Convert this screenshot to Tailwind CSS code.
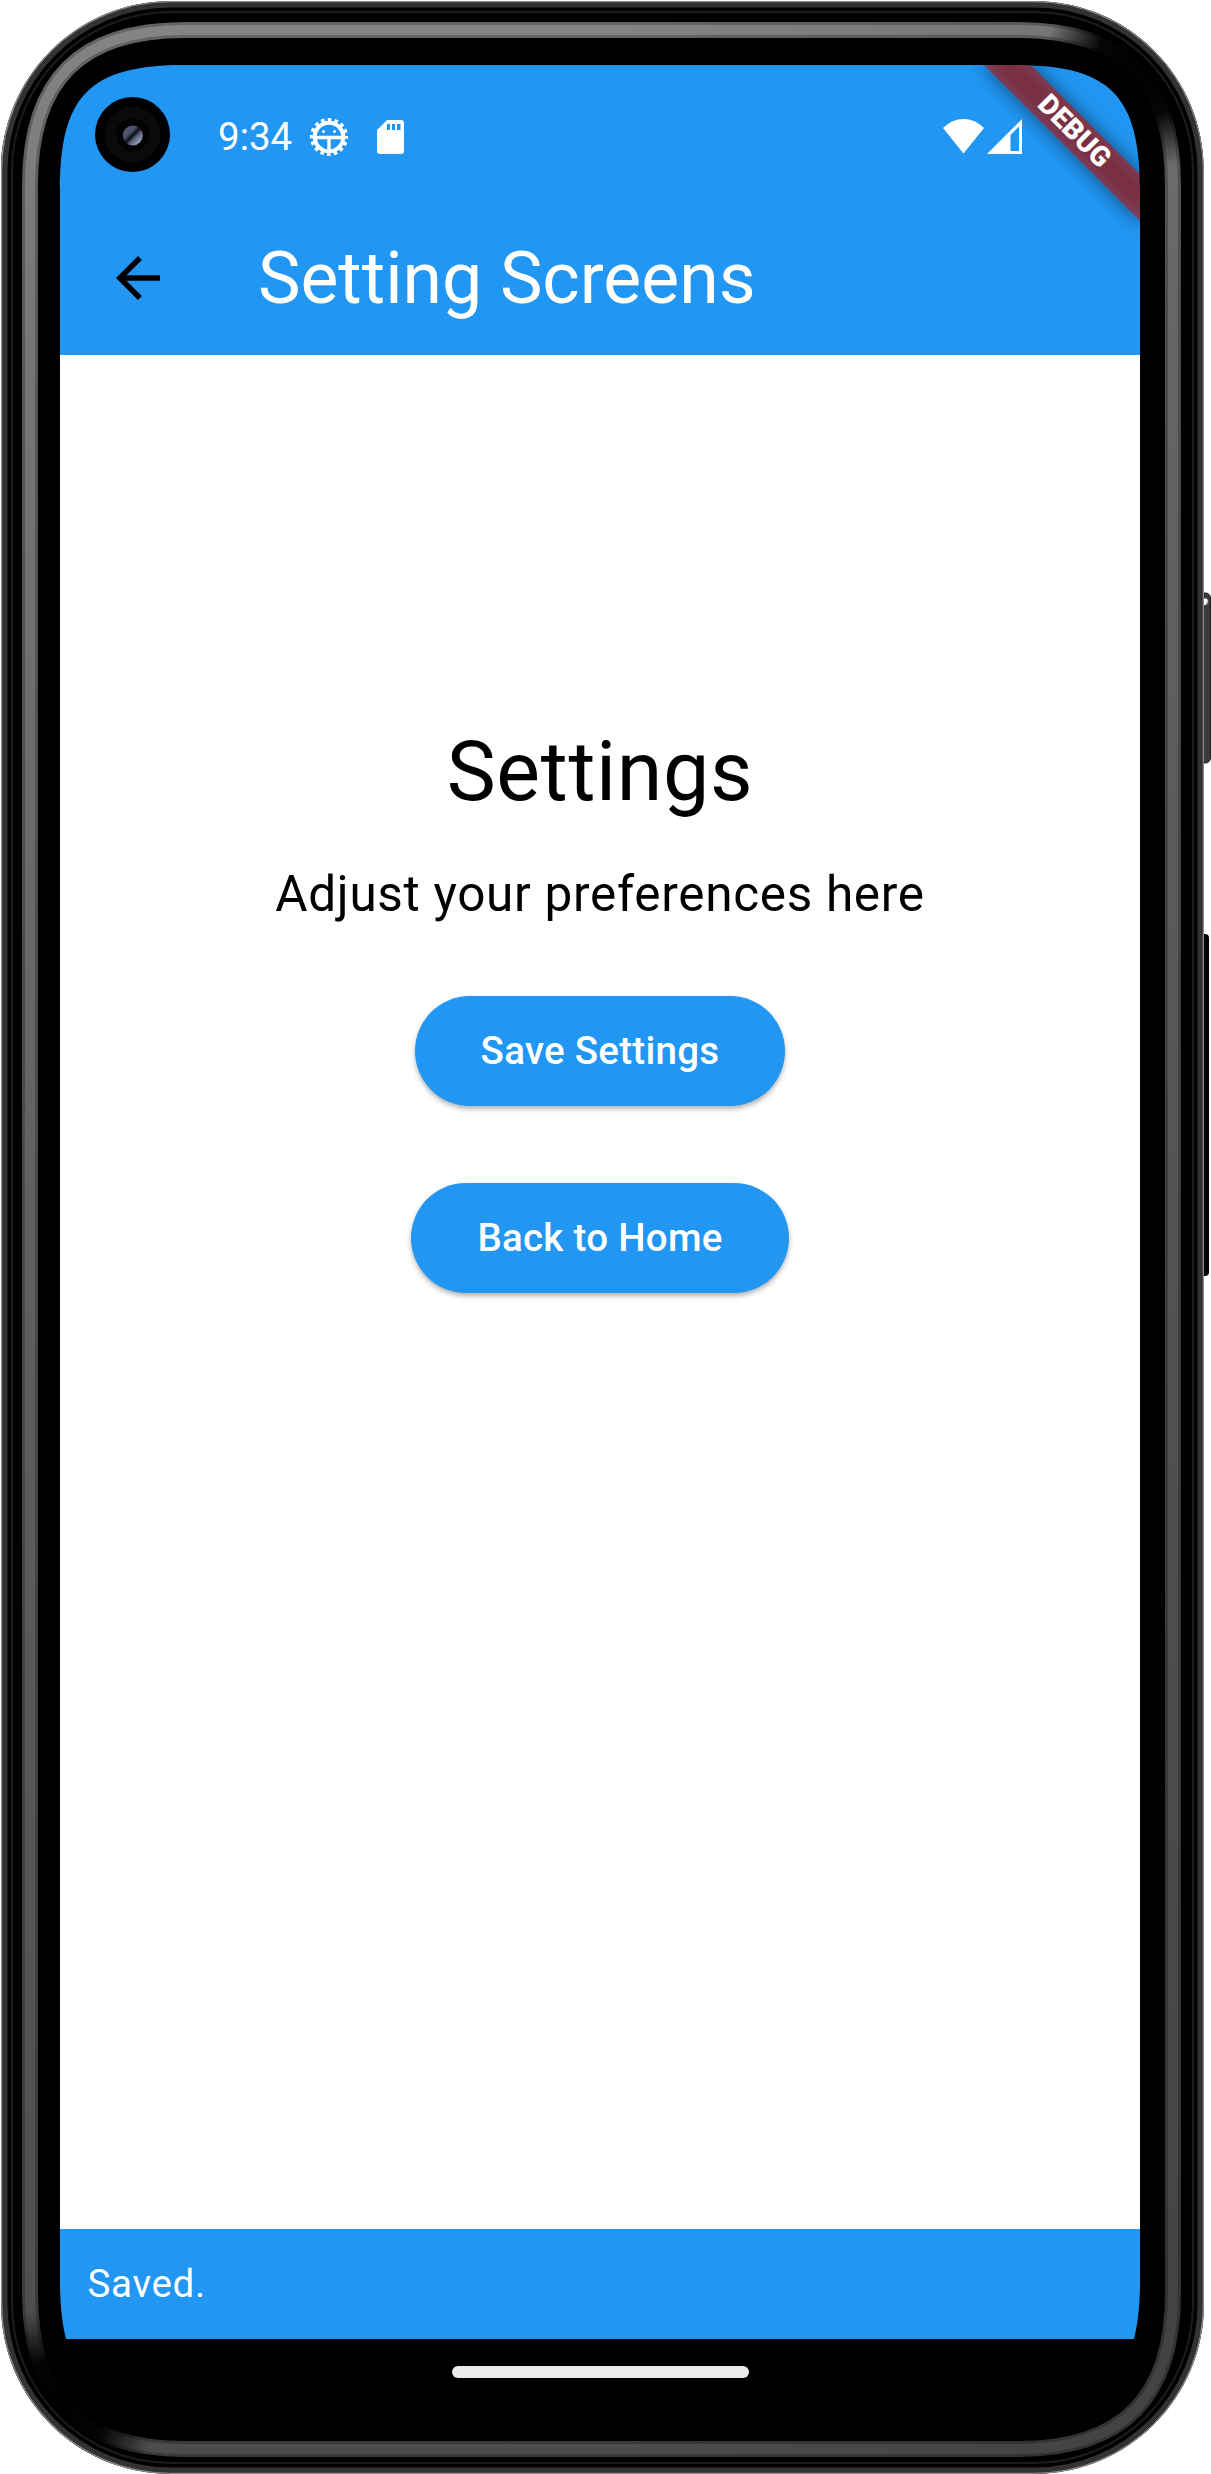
<!DOCTYPE html>
<html lang="en">
<head>
<meta charset="utf-8">
<title>Setting Screens</title>
<script src="https://cdn.jsdelivr.net/npm/@tailwindcss/browser@4"></script>
</head>
<body class="bg-white font-['Roboto',sans-serif]">
<div class="relative w-[1211px] h-[2474px] overflow-hidden pt-[65px] pl-[60px]">
  <main class="relative w-[1080px] h-[2340px] overflow-hidden bg-white flex flex-col">
    <header class="h-[290px] bg-[#2196f3] text-white flex flex-col shrink-0">
      <div class="h-[136px] flex items-center pl-[158px] pr-[118px] pt-[7px]">
        <span class="text-[38.5px] leading-none pt-[2px]">9:34</span>
        <svg class="ml-[17px] w-[40px] h-[40px]" viewBox="0 0 40 40" fill="none" stroke="#fff">
          <circle cx="20" cy="20" r="14.300" stroke-width="4"/>
          <circle cx="20" cy="20" r="17.300" stroke-width="3.600" stroke-dasharray="3.500 3.294" stroke-dashoffset="1.750"/>
          <path d="M6 20.500H34M20 21V34" stroke-width="3.400"/>
          <circle cx="14.500" cy="14.500" r="1.500" fill="#fff" stroke="none"/>
          <circle cx="25.500" cy="14.500" r="1.500" fill="#fff" stroke="none"/>
        </svg>
        <svg class="ml-[28px] w-[27px] h-[34px]" viewBox="0 0 27 34"><path fill="#fff" fill-rule="evenodd" d="M10 0H24Q27 0 27 3V31Q27 34 24 34H3Q0 34 0 31V10ZM10 4V10H13V4ZM15 4V10H18V4ZM20 4V10H23.500V4Z"/></svg>
        <svg class="ml-auto w-[41px] h-[35px]" viewBox="0 0 41 35"><path fill="#fff" d="M0 9Q9 0 20.500 0T41 9L20.500 34.500Z"/></svg>
        <svg class="ml-[3px] w-[35px] h-[35px]" viewBox="0 0 35 35"><path fill="#fff" fill-rule="evenodd" d="M35 0V35H0ZM32 7.500L23.500 16V32H32Z"/></svg>
      </div>
      <div class="h-[154px] flex items-center pl-[44.5px]">
        <svg class="w-[66px] h-[66px]" viewBox="0 0 24 24"><path d="M20 11H7.830l5.590-5.590L12 4l-8 8 8 8 1.410-1.410L7.830 13H20v-2z"/></svg>
        <h1 class="ml-[87.5px] pt-[2px] text-[71.5px] leading-none">Setting Screens</h1>
      </div>
    </header>
    <section class="grow flex flex-col items-center pt-[358px]">
      <h2 class="text-[82.5px] leading-[118px] tracking-[0.6875px]">Settings</h2>
      <p class="mt-[28px] text-[49.5px] leading-[71px] tracking-[0.6875px]">Adjust your preferences here</p>
      <button class="mt-[66px] h-[110px] px-[66px] rounded-full bg-[#2196f3] text-white text-[38.5px] font-medium tracking-[0.275px] shadow-[0_3px_5px_rgba(0,0,0,0.3)]">Save Settings</button>
      <button class="mt-[77px] h-[110px] px-[66px] rounded-full bg-[#2196f3] text-white text-[38.5px] font-medium tracking-[0.275px] shadow-[0_3px_5px_rgba(0,0,0,0.3)]">Back to Home</button>
    </section>
    <div class="h-[110px] shrink-0 bg-[#2196f3] text-white flex items-center pl-[27.5px] text-[38.5px] tracking-[0.6875px]">Saved.</div>
    <nav class="h-[66px] shrink-0 bg-black flex justify-center pt-[27px]"><div class="w-[297px] h-[12px] rounded-full bg-[#ebebeb]"></div></nav>
    <div class="absolute left-[903.9px] top-[49.6px] w-[220px] h-[33px] rotate-45">
      <div class="absolute inset-0 bg-black/50 blur-[10px]"></div>
      <div class="relative w-full h-full bg-[#b71c1c]/63 text-white text-[28px] font-black flex items-center justify-center leading-none pb-[1px]">DEBUG</div>
    </div>
  </main>

  <!-- Device frame over the screen -->
  <svg class="absolute inset-0 w-[1211px] h-[2474px] pointer-events-none" viewBox="0 0 1211 2474" fill="none">
    <defs>
      <linearGradient id="ring" x1="0" y1="0" x2="0" y2="2474" gradientUnits="userSpaceOnUse">
        <stop offset="0" stop-color="#858585"/><stop offset=".12" stop-color="#777"/><stop offset=".5" stop-color="#606060"/><stop offset="1" stop-color="#4c4c4c"/>
      </linearGradient>
      <linearGradient id="side" x1="0" y1="0" x2="1211" y2="0" gradientUnits="userSpaceOnUse">
        <stop offset=".5" stop-color="#000" stop-opacity="0"/><stop offset="1" stop-color="#000" stop-opacity=".15"/>
      </linearGradient>
      <radialGradient id="dark"><stop offset="0" stop-color="#000"/><stop offset=".5" stop-color="#000" stop-opacity=".95"/><stop offset="1" stop-color="#000" stop-opacity="0"/></radialGradient>
      <linearGradient id="lens" x1="0" y1="0" x2="1" y2="1"><stop offset="0" stop-color="#59617c"/><stop offset=".36" stop-color="#4a5068"/><stop offset=".5" stop-color="#0c0e16"/><stop offset=".62" stop-color="#59617c"/><stop offset="1" stop-color="#bcc9ea"/></linearGradient>
      <clipPath id="body"><path clip-rule="evenodd" d="M171 1H1034C1128 1 1204 77 1204 171V2304C1204 2398 1128 2474 1034 2474H171C77 2474 1 2398 1 2304V171C1 77 77 1 171 1ZM60 190V2280C60 2375 90 2405 185 2405H1015C1110 2405 1140 2375 1140 2280V190C1140 95 1110 65 1015 65H185C90 65 60 95 60 190Z"/></clipPath>
    </defs>
    <!-- side keys -->
    <rect x="1198" y="593" width="12.500" height="170" rx="5" fill="#3a3a39" stroke="#1c1c1c"/>
    <circle cx="1205.500" cy="602" r="3" fill="#fff" fill-opacity=".3"/><path d="M1203 598.500H1206.500Q1208.500 600 1207 603Q1206 605.500 1203 605.500Z" fill="#fff"/>
    <rect x="1198" y="934" width="11" height="342" rx="4" fill="#050505"/>
    <g clip-path="url(#body)">
      <rect width="1211" height="2474" fill="#000"/>
      <path d="M30 185C30 80 80 30 185 30H1018C1123 30 1173 80 1173 185V2293C1173 2398 1123 2449 1018 2449H185C80 2449 30 2398 30 2293Z" stroke="url(#ring)" stroke-width="16" stroke-opacity=".75"/>
      <path d="M30 185C30 80 80 30 185 30H1018C1123 30 1173 80 1173 185V2293C1173 2398 1123 2449 1018 2449H185C80 2449 30 2398 30 2293Z" stroke="url(#ring)" stroke-width="10"/>
      <path d="M30 185C30 80 80 30 185 30H1018C1123 30 1173 80 1173 185V2293C1173 2398 1123 2449 1018 2449H185C80 2449 30 2398 30 2293Z" stroke="url(#side)" stroke-width="17"/>
      <circle cx="1150" cy="62" r="105" fill="url(#dark)"/>
      <circle cx="50" cy="2415" r="105" fill="url(#dark)"/>
      <path d="M171 12H1034C1122 12 1193 83 1193 171V2304C1193 2392 1122 2463 1034 2463H171C83 2463 12 2392 12 2304V171C12 83 83 12 171 12Z" stroke="#1c1c1c" stroke-width="2"/>
      <path d="M171 4.500H1034C1126 4.500 1200.500 79 1200.500 171V2304C1200.500 2396 1126 2470.500 1034 2470.500H171C79 2470.500 4.500 2396 4.500 2304V171C4.500 79 79 4.500 171 4.500Z" stroke="#313231" stroke-width="6"/>
      <path d="M171 1.500H1034C1128 1.500 1203.500 77 1203.500 171V2304C1203.500 2398 1128 2473.500 1034 2473.500H171C77 2473.500 1.500 2398 1.500 2304V171C1.500 77 77 1.500 171 1.500Z" stroke="#8a8a88" stroke-width="1.500"/>
    </g>
    <!-- punch-hole camera -->
    <circle cx="132.500" cy="134.500" r="37.500" fill="#000"/>
    <circle cx="132.500" cy="134.500" r="28" fill="#0a0a0a"/>
    <circle cx="132.500" cy="135" r="16.500" fill="#020202"/>
    <circle cx="132.800" cy="135.500" r="10" fill="url(#lens)"/>
  </svg>
</div>
</body>
</html>
